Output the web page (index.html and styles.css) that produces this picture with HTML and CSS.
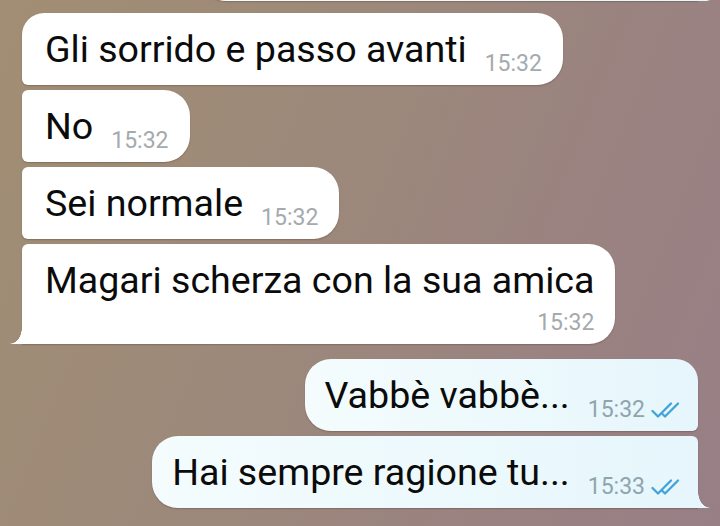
FILE: index.html
```html
<!DOCTYPE html>
<html lang="it">
<head>
<meta charset="utf-8">
<title>Chat</title>
<link rel="stylesheet" href="styles.css">
</head>
<body>
<div class="chat">
  <div class="msg out last tail cut"></div>

  <div class="msg in first group">
    <span class="text">Gli sorrido e passo avanti</span><span class="time">15:32</span>
  </div>
  <div class="msg in mid">
    <span class="text">No</span><span class="time">15:32</span>
  </div>
  <div class="msg in mid">
    <span class="text">Sei normale</span><span class="time">15:32</span>
  </div>
  <div class="msg in last tail wrap">
    <span class="text">Magari scherza con la sua amica</span><span class="time">15:32</span>
  </div>

  <div class="msg out first group">
    <span class="text">Vabbè vabbè...</span><span class="time">15:32</span>
    <svg class="ticks" viewBox="0 0 32 16" aria-hidden="true"><path d="M1.5 9 L7 14.5 L20 1.5 M14 14.5 L27 1.5 M11.5 12 L14 14.5" /></svg>
  </div>
  <div class="msg out last tail">
    <span class="text">Hai sempre ragione tu...</span><span class="time">15:33</span>
    <svg class="ticks" viewBox="0 0 32 16" aria-hidden="true"><path d="M1.5 9 L7 14.5 L20 1.5 M14 14.5 L27 1.5 M11.5 12 L14 14.5" /></svg>
  </div>
</div>
</body>
</html>
```

FILE: styles.css
```css
html, body {
  margin: 0;
  padding: 0;
  height: 526px;
  overflow: hidden;
}

body {
  background: linear-gradient(112deg, #a18e73 0%, #9d897a 40%, #9a8380 70%, #987f86 100%);
  font-family: Roboto, "Noto Sans", "Liberation Sans", sans-serif;
  color: #0b0b0b;
}

.chat {
  display: flex;
  flex-direction: column;
  gap: 5px;
  padding: 0 22px;
}

.msg {
  position: relative;
  display: flex;
  align-items: flex-end;
  box-sizing: border-box;
  min-height: 72px;
  box-shadow: 0 1px 1.5px rgba(60, 40, 30, 0.28);
}

.text {
  font-size: 37.6px;
  line-height: 46px;
  white-space: nowrap;
}

.time {
  font-size: 23px;
  line-height: 23px;
  margin-left: 18px;
  margin-bottom: -3px;
  white-space: nowrap;
}

/* incoming */
.in {
  align-self: flex-start;
  background: #ffffff;
  padding: 13px 21px 13px 23px;
  border-radius: 6px 26px 26px 6px;
}
.in .time { color: #a4aaae; }
.in.first { border-top-left-radius: 22px; }
.in.tail { border-bottom-left-radius: 0; }
.in.tail::after {
  content: "";
  position: absolute;
  left: -12px;
  bottom: 0;
  width: 14px;
  height: 16px;
  background: radial-gradient(ellipse 12px 16px at 0 0, rgba(255,255,255,0) 96%, #ffffff 100%);
}

.wrap {
  flex-direction: column;
  align-items: stretch;
}
.wrap .time {
  align-self: flex-end;
  margin-left: 0;
  margin-top: 8px;
}

/* outgoing */
.out {
  align-self: flex-end;
  background: linear-gradient(to right, #f4fcfd, #e6f6fc);
  padding: 13px 15px 13px 20px;
  border-radius: 26px 6px 6px 26px;
}
.out .time { color: #8fa4ad; }
.out.first { border-top-right-radius: 22px; }
.out.tail { border-bottom-right-radius: 0; }
.out.tail::after {
  content: "";
  position: absolute;
  right: -12px;
  bottom: 0;
  width: 14px;
  height: 16px;
  background: radial-gradient(ellipse 12px 16px at 100% 0, rgba(230,246,252,0) 96%, #e6f6fc 100%);
}

.cut {
  width: 498px;
  height: 60px;
  min-height: 0;
  margin-top: -59px;
}

.group { margin-top: 7px; }
.out.group { margin-top: 10px; }

.ticks {
  width: 32px;
  height: 16px;
  margin-left: 6px;
  margin-bottom: 0;
  flex: none;
}
.ticks path {
  fill: none;
  stroke: #42a3d8;
  stroke-width: 2.3;
  stroke-linecap: round;
  stroke-linejoin: round;
}
```
